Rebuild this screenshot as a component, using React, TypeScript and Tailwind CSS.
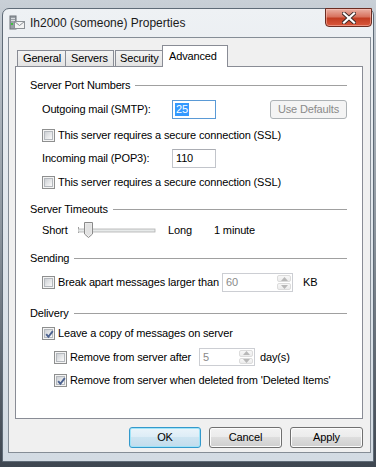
import React from "react";

const btnBase =
  "flex items-center justify-center rounded-[3px] border text-[11px] tracking-[-0.15px]";

function CheckBox({ checked = false }: { checked?: boolean }) {
  return (
    <span className="relative flex h-[13px] w-[13px] shrink-0 items-center justify-center border border-[#8e8f8f] bg-[#f4f4f4]">
      <span className="h-[9px] w-[9px] border border-[#b4b8bd] bg-linear-to-br from-[#cdd0d4] to-[#fbfbfb]" />
      {checked && (
        <svg className="absolute left-[1px] top-[1px]" width="11" height="11" viewBox="0 0 11 11">
          <path d="M2.2 5.2 L4.4 7.8 L8.8 2.2" fill="none" stroke="#4c6290" strokeWidth="1.9" />
        </svg>
      )}
    </span>
  );
}

function Section({ title }: { title: string }) {
  return (
    <div className="flex h-4 items-center pl-[14px] pr-[15px]">
      <span>{title}</span>
      <span className="ml-[5px] h-px flex-1 bg-[#a0a0a0]" />
    </div>
  );
}

function SpinArrows() {
  return (
    <div className="flex w-[16px] flex-col gap-px p-px">
      <span className="flex flex-1 items-center justify-center rounded-[2px] border border-[#dcdcdc] bg-linear-to-b from-[#f7f7f7] to-[#ececec]">
        <svg width="7" height="4" viewBox="0 0 7 4">
          <path d="M0 4 L3.5 0 L7 4 Z" fill="#b8b8b8" />
        </svg>
      </span>
      <span className="flex flex-1 items-center justify-center rounded-[2px] border border-[#dcdcdc] bg-linear-to-b from-[#f7f7f7] to-[#ececec]">
        <svg width="7" height="4" viewBox="0 0 7 4">
          <path d="M0 0 L3.5 4 L7 0 Z" fill="#b8b8b8" />
        </svg>
      </span>
    </div>
  );
}

function Slider() {
  return (
    <svg width="78" height="20" viewBox="0 0 78 20" className="shrink-0">
      <line x1="0.5" y1="7" x2="0.5" y2="13" stroke="#9a9a9a" />
      <rect x="0" y="9" width="77" height="3" fill="#e7eaea" stroke="#b0b0b0" strokeWidth="0.8" />
      <path
        d="M6.5 2.5 H14.5 V14 L10.5 17.5 L6.5 14 Z"
        fill="#f0f0f0"
        stroke="#8a8a8a"
      />
      <path d="M7.5 3.5 H13.5 V13.5 L10.5 16 L7.5 13.5 Z" fill="#e2e2e2" />
    </svg>
  );
}

function TitleIcon() {
  return (
    <svg width="16" height="16" viewBox="0 0 16 16" className="shrink-0">
      <rect x="1" y="1" width="6" height="13" fill="#9aa0a6" stroke="#6c7278" />
      <rect x="2" y="3" width="4" height="1" fill="#d8dcdf" />
      <rect x="2" y="5" width="4" height="1" fill="#d8dcdf" />
      <rect x="2" y="8" width="2" height="2" fill="#3ec23e" />
      <rect x="5.5" y="6.5" width="10" height="7" fill="#f4f4f4" stroke="#8c9196" />
      <path d="M5.5 6.5 L10.5 10.5 L15.5 6.5" fill="none" stroke="#8c9196" />
    </svg>
  );
}

export default function App() {
  return (
    <div className="h-[467px] w-[376px] overflow-hidden bg-linear-to-b from-[#c9d0d7] via-[#8a939c] to-[#3e4650] pl-[2px] pt-[8px] font-['Liberation_Sans',Arial,sans-serif] text-black">
      {/* window frame */}
      <div className="flex h-[454px] w-[372px] flex-col rounded-t-[7px] border border-[#5f6b77] bg-linear-to-b from-[#eef1f4] via-[#dfe5eb] to-[#d3dbe3] pb-[8px] pl-[5px] pr-[2px]">
        {/* title bar */}
        <div className="relative flex h-[28px] items-center gap-[5px] pl-[1px]">
          <span className="-mt-[1px]">
            <TitleIcon />
          </span>
          <span className="-mt-[1px] text-[12px] text-[#1a1a1a]">Ih2000 (someone) Properties</span>
          <div className="absolute -top-px right-[-1px] flex h-[19px] w-[47px] items-center justify-center rounded-b-[4px] border border-[#6b2d22] bg-[linear-gradient(#eab0a3,#d8735f_45%,#c23d22_55%,#d9583c)] shadow-[inset_0_0_0_1px_rgba(255,200,190,0.5)]">
            <svg width="14" height="12" viewBox="0 0 14 12">
              <path d="M2 1.5 L12 10.5 M12 1.5 L2 10.5" stroke="#3c2a28" strokeWidth="4" strokeLinecap="square" />
              <path d="M2 1.5 L12 10.5 M12 1.5 L2 10.5" stroke="#ffffff" strokeWidth="2.2" strokeLinecap="square" />
            </svg>
          </div>
        </div>

        {/* client area */}
        <div className="flex flex-1 flex-col border border-[#858d96] bg-[#f0f0f0] pl-[6px] pr-[7px] pt-[7px] text-[11px] tracking-[-0.15px]">
          {/* tabs */}
          <div className="relative z-10 flex h-[21px] items-end pl-[2px]">
            <div className="flex h-[16px] w-[49px] items-center border border-b-0 border-[#898c95] bg-linear-to-b from-[#f3f3f3] to-[#e3e3e3] pl-[5px]">
              General
            </div>
            <div className="-ml-px flex h-[16px] w-[49px] items-center border border-b-0 border-[#898c95] bg-linear-to-b from-[#f3f3f3] to-[#e3e3e3] pl-[5px]">
              Servers
            </div>
            <div className="ml-[1px] flex h-[16px] w-[48px] items-center border border-b-0 border-[#898c95] bg-linear-to-b from-[#f3f3f3] to-[#e3e3e3] pl-[4px]">
              Security
            </div>
            <div className="-mb-px -ml-px flex h-[22px] w-[66px] items-start border border-b-0 border-[#898c95] bg-white pl-[6px] pt-[2px]">
              Advanced
            </div>
          </div>

          {/* tab page */}
          <div className="flex h-[353px] flex-col border border-[#898c95] bg-white pt-[10px]">
            <Section title="Server Port Numbers" />

            <div className="mt-[7px] flex h-[19px] items-center pl-[26px]">
              <span className="w-[130px]">Outgoing mail (SMTP):</span>
              <div className="flex h-[19px] w-[44px] items-center border border-[#5a9ad6] bg-white pl-[2px]">
                <span className="bg-[#3399ff] px-px leading-[13px] text-white">25</span>
              </div>
              <div className={`${btnBase} ml-[54px] h-[19px] w-[77px] border-[#adb2b5] bg-[#f4f4f4] text-[#8a8a8a]`}>
                Use Defaults
              </div>
            </div>

            <div className="mt-[8px] flex h-4 items-center gap-[3px] pl-[26px]">
              <CheckBox />
              <span>This server requires a secure connection (SSL)</span>
            </div>

            <div className="mt-[6px] flex h-[19px] items-center pl-[26px]">
              <span className="w-[130px]">Incoming mail (POP3):</span>
              <div className="flex h-[19px] w-[44px] items-center border border-[#c2c5cb] border-t-[#abadb3] bg-white pl-[3px]">
                110
              </div>
            </div>

            <div className="mt-[6px] flex h-4 items-center gap-[3px] pl-[26px]">
              <CheckBox />
              <span>This server requires a secure connection (SSL)</span>
            </div>

            <div className="mt-[11px]">
              <Section title="Server Timeouts" />
            </div>

            <div className="mt-[3px] flex h-[20px] items-center pl-[26px]">
              <span className="w-[36px]">Short</span>
              <Slider />
              <span className="ml-[12px] w-[46px]">Long</span>
              <span>1 minute</span>
            </div>

            <div className="mt-[10px]">
              <Section title="Sending" />
            </div>

            <div className="mt-[7px] flex h-[19px] items-center pl-[26px]">
              <CheckBox />
              <span className="ml-[3px] w-[164px]">Break apart messages larger than</span>
              <div className="flex h-[19px] w-[71px] border border-[#ccced3] bg-white">
                <span className="flex flex-1 items-center pl-[3px] text-[#8a8a8a]">60</span>
                <SpinArrows />
              </div>
              <span className="ml-[10px]">KB</span>
            </div>

            <div className="mt-[13px]">
              <Section title="Delivery" />
            </div>

            <div className="mt-[4px] flex h-4 items-center gap-[3px] pl-[26px]">
              <CheckBox checked />
              <span>Leave a copy of messages on server</span>
            </div>

            <div className="mt-[7px] flex h-[18px] items-center pl-[38px]">
              <CheckBox />
              <span className="ml-[3px] w-[129px]">Remove from server after</span>
              <div className="flex h-[18px] w-[56px] border border-[#ccced3] bg-white">
                <span className="flex flex-1 items-center pl-[3px] text-[#8a8a8a]">5</span>
                <SpinArrows />
              </div>
              <span className="ml-[5px]">day(s)</span>
            </div>

            <div className="mt-[6px] flex h-4 items-center gap-[3px] pl-[38px]">
              <CheckBox checked />
              <span>Remove from server when deleted from 'Deleted Items'</span>
            </div>
          </div>

          {/* dialog buttons */}
          <div className="mt-[8px] flex h-[21px] justify-end gap-[8px]">
            <div className={`${btnBase} w-[72px] border-[#3399cc] bg-[linear-gradient(#eaf4fa,#dcecf6_50%,#cde4f1_50%,#c2dcec)] shadow-[inset_0_0_0_1px_#9fe3f8]`}>
              OK
            </div>
            <div className={`${btnBase} w-[73px] border-[#707070] bg-[linear-gradient(#f2f2f2,#ebebeb_50%,#dddddd_50%,#cfcfcf)] shadow-[inset_0_0_0_1px_#fcfcfc]`}>
              Cancel
            </div>
            <div className={`${btnBase} w-[73px] border-[#707070] bg-[linear-gradient(#f2f2f2,#ebebeb_50%,#dddddd_50%,#cfcfcf)] shadow-[inset_0_0_0_1px_#fcfcfc]`}>
              Apply
            </div>
          </div>
        </div>
      </div>
    </div>
  );
}
